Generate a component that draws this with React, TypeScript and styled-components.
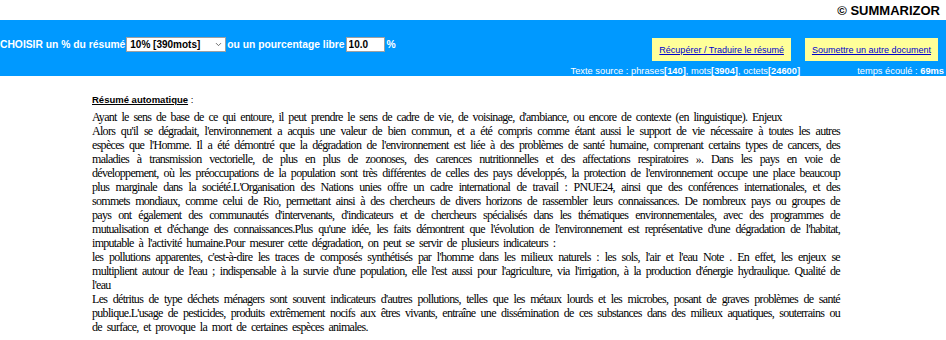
import React, { useState } from 'react';
import styled, { createGlobalStyle } from 'styled-components';
import { ChevronDown } from 'lucide-react';

const GlobalStyle = createGlobalStyle`
  body {
    margin: 0;
    background: #ffffff;
    font-family: "Liberation Sans", Arial, sans-serif;
  }
`;

// bandeau du haut
const TopLine = styled.div`
  height: 20px;
  display: flex;
  justify-content: flex-end;
  align-items: center;
  padding-right: 6px;
  font-size: 13px;
  font-weight: bold;
  color: #000;
`;

const Band = styled.div`
  height: 56px;
  background: #0099ff;
  display: flex;
  justify-content: space-between;
  color: #ffffff;
`;

const ChooseForm = styled.div`
  display: flex;
  align-items: center;
  padding-top: 17px;
  height: 14px;
  font-size: 10.3px;
  font-weight: bold;
  white-space: nowrap;
`;

const SelectWrap = styled.span`
  position: relative;
  display: inline-flex;
  margin: 0 1px;
  & svg {
    position: absolute;
    right: 3px;
    top: 3px;
    pointer-events: none;
    color: #444;
  }
`;

const PercentSelect = styled.select`
  appearance: none;
  width: 100px;
  height: 15px;
  padding: 0 0 0 3px;
  border: 1px solid #a0a0a0;
  border-radius: 0;
  font-family: "Liberation Sans", Arial, sans-serif;
  font-size: 10px;
  font-weight: bold;
  color: #000;
  background: #fff;
`;

const PercentInput = styled.input`
  width: 39px;
  height: 15px;
  box-sizing: border-box;
  margin: 0 2px 0 1px;
  padding: 0 2px;
  border: 1px solid #a0a0a0;
  font-family: "Liberation Sans", Arial, sans-serif;
  font-size: 10px;
  font-weight: bold;
  color: #000;
`;

const RightPart = styled.div`
  display: flex;
  flex-direction: column;
  align-items: flex-end;
  padding-top: 18px;
`;

const ButtonsRow = styled.div`
  display: flex;
  gap: 14px;
  padding-right: 8px;
`;

const YellowButton = styled.div`
  height: 23px;
  padding: 0 7px;
  display: flex;
  align-items: center;
  background: #ffff99;
  box-sizing: border-box;
`;

const ButtonLink = styled.a`
  font-size: 9px;
  color: #0000cc;
  text-decoration: underline;
  cursor: pointer;
`;

const StatsRow = styled.div`
  display: flex;
  margin-top: 5px;
  font-size: 9.3px;
  line-height: 11px;
  white-space: nowrap;
`;

const StatsCell = styled.div<{ $width: number }>`
  flex: 0 0 ${(p) => p.$width}px;
  text-align: right;
  padding-right: 2px;
  box-sizing: border-box;
`;

// contenu du résumé
const Content = styled.div`
  width: 748px;
  margin: 18px 0 0 92px;
`;

const SummaryTitle = styled.div`
  font-size: 9.5px;
  line-height: 11px;
  color: #000;
  margin-bottom: 5px;
  & b {
    text-decoration: underline;
  }
`;

const SummaryText = styled.div`
  font-family: "Liberation Serif", "Times New Roman", serif;
  font-size: 12px;
  letter-spacing: -0.7px;
  word-spacing: 2.4px;
  line-height: 14px;
  text-align: justify;
  color: #000;
`;

const paragraphs: string[] = [
  "Ayant le sens de base de ce qui entoure, il peut prendre le sens de cadre de vie, de voisinage, d'ambiance, ou encore de contexte (en linguistique). Enjeux",
  "Alors qu'il se dégradait, l'environnement a acquis une valeur de bien commun, et a été compris comme étant aussi le support de vie nécessaire à toutes les autres espèces que l'Homme. Il a été démontré que la dégradation de l'environnement est liée à des problèmes de santé humaine, comprenant certains types de cancers, des maladies à transmission vectorielle, de plus en plus de zoonoses, des carences nutritionnelles et des affectations respiratoires ». Dans les pays en voie de développement, où les préoccupations de la population sont très différentes de celles des pays développés, la protection de l'environnement occupe une place beaucoup plus marginale dans la société.L'Organisation des Nations unies offre un cadre international de travail : PNUE24, ainsi que des conférences internationales, et des sommets mondiaux, comme celui de Rio, permettant ainsi à des chercheurs de divers horizons de rassembler leurs connaissances. De nombreux pays ou groupes de pays ont également des communautés d'intervenants, d'indicateurs et de chercheurs spécialisés dans les thématiques environnementales, avec des programmes de mutualisation et d'échange des connaissances.Plus qu'une idée, les faits démontrent que l'évolution de l'environnement est représentative d'une dégradation de l'habitat, imputable à l'activité humaine.Pour mesurer cette dégradation, on peut se servir de plusieurs indicateurs :",
  "les pollutions apparentes, c'est-à-dire les traces de composés synthétisés par l'homme dans les milieux naturels : les sols, l'air et l'eau Note . En effet, les enjeux se multiplient autour de l'eau ; indispensable à la survie d'une population, elle l'est aussi pour l'agriculture, via l'irrigation, à la production d'énergie hydraulique. Qualité de l'eau",
  "Les détritus de type déchets ménagers sont souvent indicateurs d'autres pollutions, telles que les métaux lourds et les microbes, posant de graves problèmes de santé publique.L'usage de pesticides, produits extrêmement nocifs aux êtres vivants, entraîne une dissémination de ces substances dans des milieux aquatiques, souterrains ou de surface, et provoque la mort de certaines espèces animales.",
];

const App: React.FC = () => {
  const [percent, setPercent] = useState('10');
  const [libre, setLibre] = useState('10.0');

  return (
    <>
      <GlobalStyle />
      <TopLine>© SUMMARIZOR</TopLine>
      <Band>
        <ChooseForm>
          CHOISIR un % du résumé
          <SelectWrap>
            <PercentSelect value={percent} onChange={(e) => setPercent(e.target.value)}>
              <option value="5">5% [195mots]</option>
              <option value="10">10% [390mots]</option>
              <option value="20">20% [781mots]</option>
            </PercentSelect>
            <ChevronDown size={9} strokeWidth={2} />
          </SelectWrap>
          ou un pourcentage libre
          <PercentInput value={libre} onChange={(e) => setLibre(e.target.value)} />
          %
        </ChooseForm>
        <RightPart>
          <ButtonsRow>
            <YellowButton>
              <ButtonLink>Récupérer / Traduire le résumé</ButtonLink>
            </YellowButton>
            <YellowButton>
              <ButtonLink>Soumettre un autre document</ButtonLink>
            </YellowButton>
          </ButtonsRow>
          <StatsRow>
            <StatsCell $width={233}>
              Texte source : phrases<b>[140]</b>, mots<b>[3904]</b>, octets<b>[24600]</b>
            </StatsCell>
            <StatsCell $width={144}>
              temps écoulé : <b>69ms</b>
            </StatsCell>
          </StatsRow>
        </RightPart>
      </Band>
      <Content>
        <SummaryTitle>
          <b>Résumé automatique</b> :
        </SummaryTitle>
        <SummaryText>
          {paragraphs.map((p, i) => (
            <React.Fragment key={i}>
              {p}
              {i < paragraphs.length - 1 && <br />}
            </React.Fragment>
          ))}
        </SummaryText>
      </Content>
    </>
  );
};

export default App;
